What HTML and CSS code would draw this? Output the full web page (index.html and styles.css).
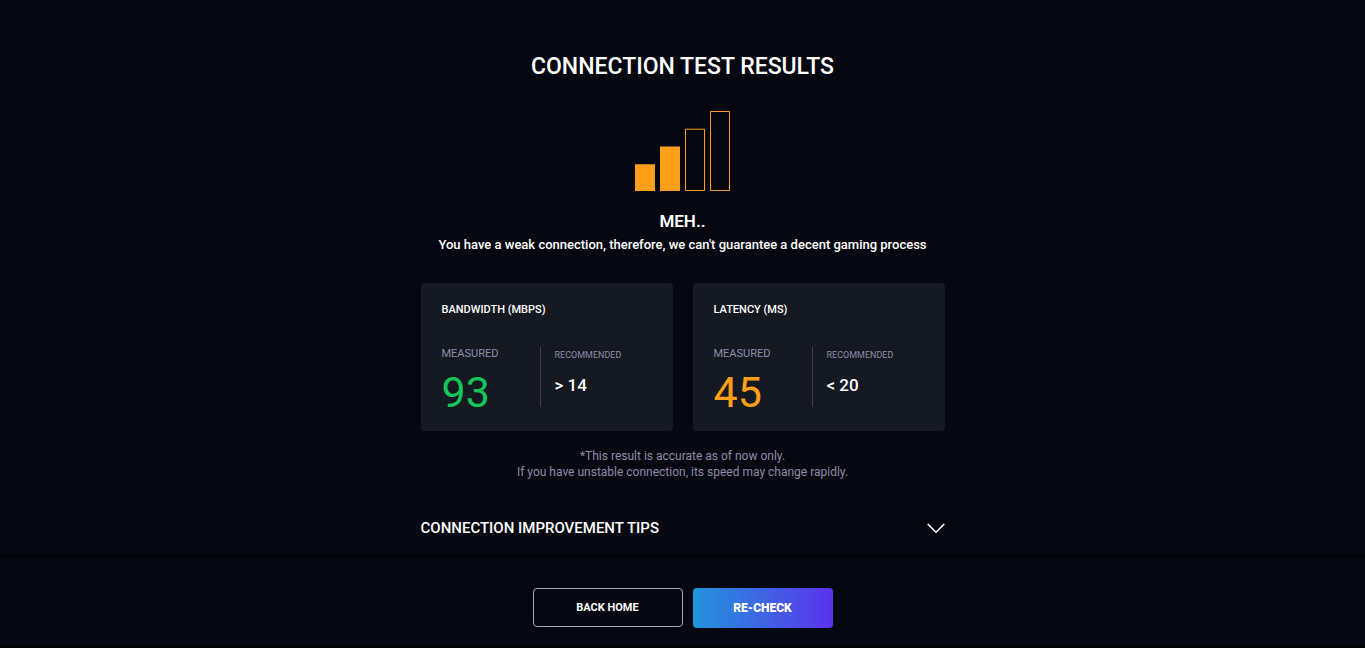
FILE: index.html
```
<!DOCTYPE html>
<html lang="en">
<head>
<meta charset="utf-8">
<meta name="viewport" content="width=device-width, initial-scale=1">
<title>Connection test results</title>
<link rel="stylesheet" href="styles.css">
</head>
<body>
<main class="results">
  <h1 class="title">CONNECTION TEST RESULTS</h1>
  <svg class="signal" width="96" height="80" viewBox="0 0 96 80" role="img" aria-label="Signal strength: 2 of 4">
    <g fill="#ff9f1a">
      <path d="M0 53.3h20V80H0zM25 35.6h20V80H25z"/>
    </g>
    <g fill="none" stroke="#ff9f1a">
      <path d="M50.500 18.200h19v61.300h-19zM75.500 .5h19v79h-19z"/>
    </g>
  </svg>
  <h2 class="verdict">MEH..</h2>
  <p class="summary">You have a weak connection, therefore, we can't guarantee a decent gaming process</p>
  <div class="cards">
    <section class="card">
      <h3 class="card-title">BANDWIDTH (MBPS)</h3>
      <div class="metrics">
        <div class="measured">
          <div class="label">MEASURED</div>
          <div class="value good">93</div>
        </div>
        <div class="recommended">
          <div class="small-label">RECOMMENDED</div>
          <div class="target">&gt; 14</div>
        </div>
      </div>
    </section>
    <section class="card">
      <h3 class="card-title">LATENCY (MS)</h3>
      <div class="metrics">
        <div class="measured">
          <div class="label">MEASURED</div>
          <div class="value fair">45</div>
        </div>
        <div class="recommended">
          <div class="small-label">RECOMMENDED</div>
          <div class="target">&lt; 20</div>
        </div>
      </div>
    </section>
  </div>
  <p class="note">*This result is accurate as of now only.<br>If you have unstable connection, its speed may change rapidly.</p>
  <button class="tips" type="button" aria-expanded="false">
    <span>CONNECTION IMPROVEMENT TIPS</span>
    <svg width="18" height="11" viewBox="0 0 18 11" fill="none" stroke="#fff" stroke-width="1.500" aria-hidden="true"><path d="M.7 1 9 9.300 17.300 1"/></svg>
  </button>
</main>
<footer class="actions">
  <button class="btn outline" type="button">BACK HOME</button>
  <button class="btn primary" type="button">RE-CHECK</button>
</footer>
</body>
</html>
```
FILE: styles.css
```
* {
  box-sizing: border-box;
}

body {
  margin: 0;
  min-height: 100vh;
  display: flex;
  flex-direction: column;
  background: #050810;
  color: #fff;
  font-family: Roboto, "Liberation Sans", sans-serif;
}

h1, h2, h3, p {
  margin: 0;
}

button {
  font-family: inherit;
  color: inherit;
  cursor: pointer;
}

.results {
  flex: 1;
  width: 100%;
  max-width: 524px;
  margin: 0 auto;
  padding-top: 51px;
  display: flex;
  flex-direction: column;
  align-items: center;
  text-align: center;
}

.title {
  font-size: 23px;
  line-height: 32px;
  font-weight: 500;
}

.signal {
  display: block;
  margin-top: 28px;
}

.verdict {
  margin-top: 18px;
  font-size: 17px;
  line-height: 24px;
  font-weight: 600;
}

.summary {
  font-size: 13px;
  line-height: 24px;
  font-weight: 500;
}

.cards {
  width: 100%;
  margin-top: 26px;
  display: grid;
  grid-template-columns: 1fr 1fr;
  gap: 20px;
}

.card {
  padding: 18px 21px;
  border-radius: 4px;
  background: #151922;
  text-align: left;
}

.card-title {
  font-size: 11px;
  line-height: 18px;
  font-weight: 500;
}

.metrics {
  margin-top: 28px;
  display: flex;
}

.measured {
  width: 98px;
}

.label {
  color: #8e8ba6;
  font-size: 11px;
  line-height: 14px;
}

.value {
  margin-top: 10px;
  font-size: 43px;
  line-height: 42px;
}

.good {
  color: #17c457;
}

.fair {
  color: #ff9f1a;
}

.recommended {
  height: 60px;
  padding-left: 14px;
  border-left: 1px solid #3b3e49;
}

.small-label {
  color: #8e8ba6;
  font-size: 9px;
  line-height: 16px;
}

.target {
  margin-top: 10px;
  font-size: 17px;
  line-height: 24px;
  font-weight: 500;
}

.note {
  margin-top: 17px;
  color: #8e8ba6;
  font-size: 12px;
  line-height: 16px;
}

.tips {
  width: 100%;
  margin-top: 36px;
  padding: 0;
  border: 0;
  background: none;
  display: flex;
  align-items: center;
  justify-content: space-between;
  font-size: 15px;
  line-height: 24px;
  font-weight: 500;
}

.actions {
  display: flex;
  justify-content: center;
  align-items: flex-start;
  gap: 10px;
  padding: 31px 0 17px;
  border-bottom: 3px solid #020307;
  box-shadow: 0 -1px 2px #020307;
}

.btn {
  border-radius: 4px;
  font-size: 12px;
}

.outline {
  width: 150px;
  height: 39px;
  border: 1px solid #a6a8b8;
  background: transparent;
  font-size: 11px;
  font-weight: 700;
}

.primary {
  width: 140px;
  height: 40px;
  border: 0;
  background: linear-gradient(90deg, #2196dc, #5b32ec);
  font-weight: 900;
}
```
